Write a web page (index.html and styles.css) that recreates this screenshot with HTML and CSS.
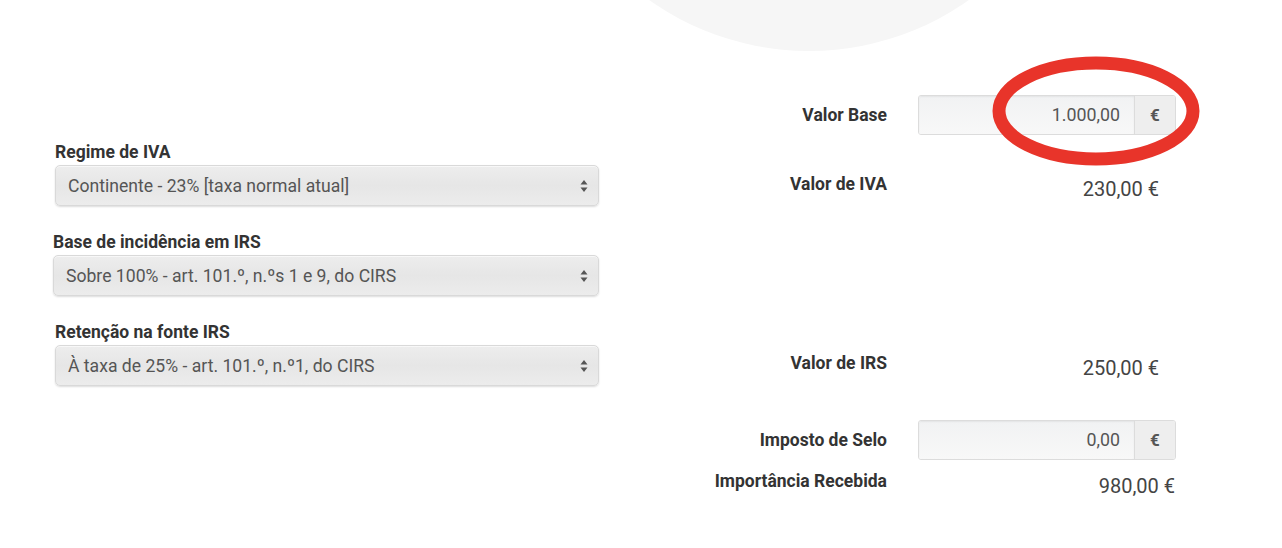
FILE: index.html
```html
<!DOCTYPE html>
<html lang="pt">
<head>
<meta charset="utf-8">
<title>Calculadora de recibo</title>
<link rel="stylesheet" href="styles.css">
</head>
<body>
<div class="blob"></div>
<div class="page">
  <div class="left">
    <div class="field">
      <div class="flabel">Regime de IVA</div>
      <div class="select">
        <span class="stext">Continente - 23% [taxa normal atual]</span>
        <svg class="arrows" width="8" height="14" viewBox="0 0 8 14"><path d="M4 1 L7.5 5.5 L0.5 5.5 Z M4 13 L7.5 8.5 L0.5 8.5 Z" fill="#555"/></svg>
      </div>
    </div>
    <div class="field shift">
      <div class="flabel">Base de incidência em IRS</div>
      <div class="select">
        <span class="stext">Sobre 100% - art. 101.º, n.ºs 1 e 9, do CIRS</span>
        <svg class="arrows" width="8" height="14" viewBox="0 0 8 14"><path d="M4 1 L7.5 5.5 L0.5 5.5 Z M4 13 L7.5 8.5 L0.5 8.5 Z" fill="#555"/></svg>
      </div>
    </div>
    <div class="field">
      <div class="flabel">Retenção na fonte IRS</div>
      <div class="select">
        <span class="stext">À taxa de 25% - art. 101.º, n.º1, do CIRS</span>
        <svg class="arrows" width="8" height="14" viewBox="0 0 8 14"><path d="M4 1 L7.5 5.5 L0.5 5.5 Z M4 13 L7.5 8.5 L0.5 8.5 Z" fill="#555"/></svg>
      </div>
    </div>
  </div>
  <div class="right">
    <div class="row r-base">
      <div class="rlabel pad">Valor Base</div>
      <div class="cell">
        <div class="igroup">
          <div class="input">1.000,00</div>
          <div class="addon">€</div>
        </div>
        <svg class="mark" width="216" height="118" viewBox="0 0 216 118"><ellipse cx="108" cy="59" rx="97" ry="48" fill="none" stroke="#e8342a" stroke-width="13"/></svg>
      </div>
    </div>
    <div class="row r-iva">
      <div class="rlabel">Valor de IVA</div>
      <div class="cell value">230,00 €</div>
    </div>
    <div class="row r-irs">
      <div class="rlabel">Valor de IRS</div>
      <div class="cell value">250,00 €</div>
    </div>
    <div class="row r-selo">
      <div class="rlabel pad">Imposto de Selo</div>
      <div class="cell">
        <div class="igroup">
          <div class="input">0,00</div>
          <div class="addon">€</div>
        </div>
      </div>
    </div>
    <div class="row r-total">
      <div class="rlabel">Importância Recebida</div>
      <div class="cell value total">980,00 €</div>
    </div>
  </div>
</div>
</body>
</html>
```
FILE: styles.css
```css
html, body {
  margin: 0;
  padding: 0;
  background: #ffffff;
  font-family: Roboto, "Liberation Sans", Arial, sans-serif;
  color: #333;
}
body {
  width: 1282px;
  height: 548px;
  position: relative;
  overflow: hidden;
}
.blob {
  position: absolute;
  left: 533px;
  top: -501px;
  width: 552px;
  height: 552px;
  border-radius: 50%;
  background: #f6f6f6;
}
.page {
  position: relative;
  display: flex;
  padding-left: 55px;
}
.left {
  width: 544px;
  padding-top: 142px;
  display: flex;
  flex-direction: column;
  gap: 26px;
}
.field.shift {
  margin-left: -2px;
}
.flabel {
  font-size: 17.5px;
  font-weight: 700;
  line-height: 20px;
  color: #333;
  margin-bottom: 3px;
}
.select {
  height: 41px;
  box-sizing: border-box;
  border: 1px solid #d9d9d9;
  border-radius: 5px;
  background: linear-gradient(#ededed, #e6e6e6 50%, #ececec);
  box-shadow: 0 1px 2px rgba(0,0,0,0.14), inset 0 1px 0 rgba(255,255,255,0.6);
  display: flex;
  align-items: center;
  justify-content: space-between;
  padding: 0 10px 0 12px;
}
.stext {
  font-size: 17.6px;
  color: #555;
}
.arrows {
  display: block;
}
.right {
  margin-left: 101px;
  padding-top: 95px;
  display: flex;
  flex-direction: column;
}
.row {
  display: flex;
  align-items: flex-start;
}
.rlabel {
  width: 187px;
  text-align: right;
  font-size: 17.5px;
  font-weight: 700;
  line-height: 20px;
  color: #333;
}
.rlabel.pad {
  padding-top: 10px;
}
.cell {
  margin-left: 31px;
  width: 258px;
  position: relative;
}
.value {
  box-sizing: border-box;
  text-align: right;
  font-size: 20px;
  line-height: 20px;
  padding-top: 5px;
  padding-right: 17px;
  color: #444;
}
.value.total {
  padding-right: 1px;
}
.r-iva { margin-top: 39px; }
.r-irs { margin-top: 154px; }
.r-selo { margin-top: 42px; }
.r-total { margin-top: 11px; }
.igroup {
  display: flex;
  height: 40px;
  box-sizing: border-box;
  border: 1px solid #dcdcdc;
  border-radius: 3px;
  overflow: hidden;
}
.input {
  flex: 1;
  background: linear-gradient(#f1f2f3, #f8f8f8);
  box-shadow: inset 0 1px 2px rgba(0,0,0,0.06);
  text-align: right;
  padding-right: 14px;
  font-size: 17.8px;
  line-height: 38px;
  color: #555;
}
.addon {
  width: 40px;
  border-left: 1px solid #dcdcdc;
  background: #eeeeee;
  text-align: center;
  font-size: 17px;
  font-weight: 700;
  line-height: 38px;
  color: #555;
}
.mark {
  position: absolute;
  left: 70px;
  top: -43px;
}
```
